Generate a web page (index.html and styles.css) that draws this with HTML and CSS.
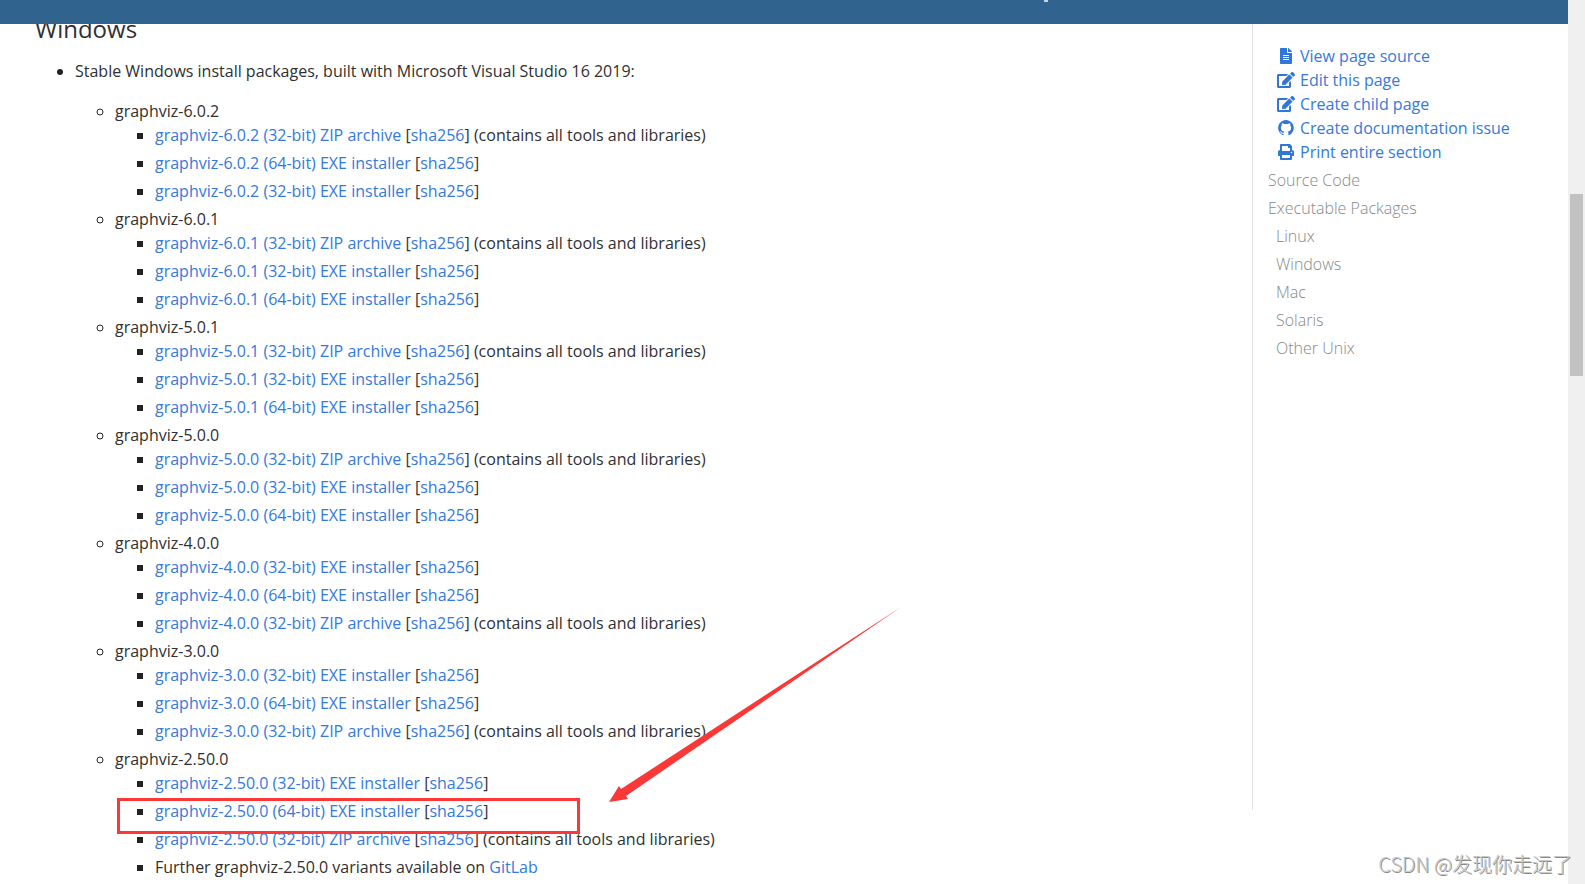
FILE: index.html
```
<!DOCTYPE html>
<html lang="en">
<head>
<meta charset="utf-8">
<title>Download | Graphviz</title>
<link rel="stylesheet" href="styles.css">
</head>
<body>
<header class="navbar"><span class="nav-mark"></span></header>
<div class="layout">
  <main class="content">
    <h3>Windows</h3>
    <ul class="packages">
      <li>
        <p>Stable Windows install packages, built with Microsoft Visual Studio 16 2019:</p>
        <ul>
          <li>graphviz-6.0.2
            <ul class="files">
              <li><a href="#">graphviz-6.0.2 (32-bit) ZIP archive</a> [<a href="#">sha256</a>] (contains all tools and libraries)</li>
              <li><a href="#">graphviz-6.0.2 (64-bit) EXE installer</a> [<a href="#">sha256</a>]</li>
              <li><a href="#">graphviz-6.0.2 (32-bit) EXE installer</a> [<a href="#">sha256</a>]</li>
            </ul>
          </li>
          <li>graphviz-6.0.1
            <ul class="files">
              <li><a href="#">graphviz-6.0.1 (32-bit) ZIP archive</a> [<a href="#">sha256</a>] (contains all tools and libraries)</li>
              <li><a href="#">graphviz-6.0.1 (32-bit) EXE installer</a> [<a href="#">sha256</a>]</li>
              <li><a href="#">graphviz-6.0.1 (64-bit) EXE installer</a> [<a href="#">sha256</a>]</li>
            </ul>
          </li>
          <li>graphviz-5.0.1
            <ul class="files">
              <li><a href="#">graphviz-5.0.1 (32-bit) ZIP archive</a> [<a href="#">sha256</a>] (contains all tools and libraries)</li>
              <li><a href="#">graphviz-5.0.1 (32-bit) EXE installer</a> [<a href="#">sha256</a>]</li>
              <li><a href="#">graphviz-5.0.1 (64-bit) EXE installer</a> [<a href="#">sha256</a>]</li>
            </ul>
          </li>
          <li>graphviz-5.0.0
            <ul class="files">
              <li><a href="#">graphviz-5.0.0 (32-bit) ZIP archive</a> [<a href="#">sha256</a>] (contains all tools and libraries)</li>
              <li><a href="#">graphviz-5.0.0 (32-bit) EXE installer</a> [<a href="#">sha256</a>]</li>
              <li><a href="#">graphviz-5.0.0 (64-bit) EXE installer</a> [<a href="#">sha256</a>]</li>
            </ul>
          </li>
          <li>graphviz-4.0.0
            <ul class="files">
              <li><a href="#">graphviz-4.0.0 (32-bit) EXE installer</a> [<a href="#">sha256</a>]</li>
              <li><a href="#">graphviz-4.0.0 (64-bit) EXE installer</a> [<a href="#">sha256</a>]</li>
              <li><a href="#">graphviz-4.0.0 (32-bit) ZIP archive</a> [<a href="#">sha256</a>] (contains all tools and libraries)</li>
            </ul>
          </li>
          <li>graphviz-3.0.0
            <ul class="files">
              <li><a href="#">graphviz-3.0.0 (32-bit) EXE installer</a> [<a href="#">sha256</a>]</li>
              <li><a href="#">graphviz-3.0.0 (64-bit) EXE installer</a> [<a href="#">sha256</a>]</li>
              <li><a href="#">graphviz-3.0.0 (32-bit) ZIP archive</a> [<a href="#">sha256</a>] (contains all tools and libraries)</li>
            </ul>
          </li>
          <li>graphviz-2.50.0
            <ul class="files">
              <li><a href="#">graphviz-2.50.0 (32-bit) EXE installer</a> [<a href="#">sha256</a>]</li>
              <li class="marked"><a href="#">graphviz-2.50.0 (64-bit) EXE installer</a> [<a href="#">sha256</a>]</li>
              <li><a href="#">graphviz-2.50.0 (32-bit) ZIP archive</a> [<a href="#">sha256</a>] (contains all tools and libraries)</li>
              <li>Further graphviz-2.50.0 variants available on <a href="#">GitLab</a></li>
            </ul>
          </li>
        </ul>
      </li>
    </ul>
  </main>
  <aside class="sidebar">
    <div class="page-meta">
      <a href="#"><svg class="icon" viewBox="-128 0 640 512" aria-hidden="true"><path d="M224 136V0H24C10.700 0 0 10.700 0 24v464c0 13.300 10.700 24 24 24h336c13.300 0 24-10.700 24-24V160H248c-13.200 0-24-10.800-24-24zm64 236c0 6.600-5.400 12-12 12H108c-6.600 0-12-5.400-12-12v-8c0-6.600 5.400-12 12-12h168c6.600 0 12 5.400 12 12v8zm0-64c0 6.600-5.400 12-12 12H108c-6.600 0-12-5.400-12-12v-8c0-6.600 5.400-12 12-12h168c6.600 0 12 5.400 12 12v8zm0-72v8c0 6.600-5.400 12-12 12H108c-6.600 0-12-5.400-12-12v-8c0-6.600 5.400-12 12-12h168c6.600 0 12 5.400 12 12zm96-114.100v6.100H256V0h6.100c6.400 0 12.500 2.500 17 7l97.900 98c4.500 4.500 7 10.600 7 16.900z"/></svg>View page source</a>
      <a href="#"><svg class="icon" viewBox="-32 0 640 512" aria-hidden="true"><path d="M402.600 83.200l90.200 90.200c3.800 3.800 3.800 10 0 13.800L274.400 405.600l-92.800 10.300c-12.400 1.400-22.900-9.100-21.500-21.500l10.300-92.800L388.800 83.200c3.800-3.800 10-3.800 13.800 0zm162-22.900l-48.800-48.800c-15.200-15.200-39.900-15.200-55.200 0l-35.400 35.400c-3.800 3.800-3.800 10 0 13.800l90.200 90.200c3.800 3.800 10 3.800 13.800 0l35.400-35.400c15.200-15.300 15.200-40 0-55.200zM384 346.200V448H64V128h229.800c3.200 0 6.200-1.300 8.500-3.500l40-40c7.600-7.600 2.200-20.500-8.500-20.500H48C21.500 64 0 85.500 0 112v352c0 26.500 21.500 48 48 48h352c26.500 0 48-21.500 48-48V306.200c0-10.700-12.900-16-20.500-8.500l-40 40c-2.200 2.300-3.500 5.300-3.500 8.500z"/></svg>Edit this page</a>
      <a href="#"><svg class="icon" viewBox="-32 0 640 512" aria-hidden="true"><path d="M402.600 83.200l90.200 90.200c3.800 3.800 3.800 10 0 13.800L274.400 405.600l-92.800 10.300c-12.400 1.400-22.900-9.100-21.500-21.500l10.300-92.800L388.800 83.200c3.800-3.800 10-3.800 13.800 0zm162-22.900l-48.800-48.800c-15.200-15.200-39.900-15.200-55.200 0l-35.400 35.400c-3.800 3.800-3.800 10 0 13.800l90.200 90.200c3.800 3.800 10 3.800 13.800 0l35.400-35.400c15.200-15.300 15.200-40 0-55.200zM384 346.200V448H64V128h229.800c3.200 0 6.200-1.300 8.500-3.500l40-40c7.600-7.600 2.200-20.500-8.500-20.500H48C21.500 64 0 85.500 0 112v352c0 26.500 21.500 48 48 48h352c26.500 0 48-21.500 48-48V306.200c0-10.700-12.900-16-20.500-8.500l-40 40c-2.200 2.300-3.500 5.300-3.500 8.500z"/></svg>Create child page</a>
      <a href="#"><svg class="icon" viewBox="-2 0 20 16" aria-hidden="true"><path fill-rule="evenodd" d="M5.500 15.300V13.700C3.300 14.100 2.800 12.900 2.500 12.200C2.300 11.800 1.900 11.400 1.500 11.200C2.700 10.900 3.300 11.800 3.700 12.300C4.200 13 5 12.900 5.600 12.700C5.700 12.200 5.900 11.900 6.200 11.600C3.900 11.300 2.900 9.900 2.900 7.800C2.900 6.900 3.200 6.100 3.800 5.500C3.600 4.900 3.600 4.100 3.900 3.300C4.600 3.200 5.400 3.600 6.100 4.100C7.300 3.800 8.700 3.800 9.900 4.100C10.600 3.600 11.400 3.200 12.100 3.300C12.400 4.100 12.400 4.900 12.200 5.500C12.800 6.100 13.100 6.900 13.100 7.800C13.100 9.900 12.100 11.300 9.800 11.600C10.200 12 10.400 12.600 10.400 13.200V15.300A7.800 7.800 0 1 0 5.500 15.300Z"/></svg>Create documentation issue</a>
      <a href="#"><svg class="icon" viewBox="-64 0 640 512" aria-hidden="true"><path d="M448 192V77.250c0-8.490-3.370-16.620-9.370-22.630L393.370 9.370c-6-6-14.140-9.370-22.630-9.370H96C78.330 0 64 14.330 64 32v160c-35.350 0-64 28.650-64 64v112c0 8.840 7.160 16 16 16h48v96c0 17.670 14.330 32 32 32h320c17.670 0 32-14.330 32-32v-96h48c8.840 0 16-7.160 16-16V256c0-35.350-28.650-64-64-64zm-64 256H128v-96h256v96zm0-224H128V64h192v48c0 8.840 7.160 16 16 16h48v96zm48 72c-13.250 0-24-10.750-24-24 0-13.260 10.750-24 24-24s24 10.740 24 24c0 13.250-10.750 24-24 24z"/></svg>Print entire section</a>
    </div>
    <nav class="toc">
      <ul>
        <li><a href="#">Source Code</a></li>
        <li><a href="#">Executable Packages</a>
          <ul>
            <li><a href="#">Linux</a></li>
            <li><a href="#">Windows</a></li>
            <li><a href="#">Mac</a></li>
            <li><a href="#">Solaris</a></li>
            <li><a href="#">Other Unix</a></li>
          </ul>
        </li>
      </ul>
    </nav>
  </aside>
  <div class="scrollbar"><div class="thumb"></div></div>
</div>
<svg class="arrow" viewBox="0 0 294 196" aria-hidden="true"><path d="M0 195L10 179L12 182L292 0L17 189L19 192Z"/></svg>
<div class="watermark">CSDN @发现你走远了</div>
</body>
</html>
```
FILE: styles.css
```
*,
*::after {
  box-sizing: border-box;
}

body {
  margin: 0;
  height: 100vh;
  overflow: hidden;
  position: relative;
  background: #fff;
  color: #303030;
  font: 16px/24px "Open Sans", sans-serif;
}

a {
  color: #3579dc;
  text-decoration: none;
}

ul {
  margin: 0;
  padding-left: 40px;
}

li::marker {
  color: #222;
}

.navbar {
  position: absolute;
  top: 0;
  left: 0;
  right: 17px;
  z-index: 2;
  height: 24px;
  background: #30638e;
}

.nav-mark {
  position: absolute;
  top: 0;
  left: 1044px;
  width: 4px;
  height: 2px;
  background: #c5d3df;
}

.layout {
  display: flex;
  height: 100vh;
}

.content {
  flex: 1;
  padding: 14px 16px 0 35px;
}

.content h3 {
  margin: 0 0 16px;
  font-size: 24px;
  line-height: 29px;
  font-weight: 400;
}

.content p {
  margin: 0 0 16px;
}

.packages {
  list-style: disc;
}

.packages ul {
  list-style: circle;
}

.packages .files {
  list-style: square;
}

.files li {
  margin-bottom: 4px;
}

.marked {
  position: relative;
}

.marked::after {
  content: "";
  position: absolute;
  top: -1px;
  left: -38px;
  width: 463px;
  height: 36px;
  border: 3px solid #fb3838;
}

.sidebar {
  width: 316px;
  height: calc(100vh - 74px);
  padding: 44px 15px 0;
  border-left: 1px solid #dee2e6;
}

.page-meta {
  display: flex;
  flex-direction: column;
  padding-left: 8px;
}

.page-meta a {
  display: flex;
  align-items: center;
  gap: 4px;
}

.icon {
  width: 20px;
  height: 16px;
  fill: #3176d9;
}

.toc ul {
  list-style: none;
  padding: 0;
}

.toc ul ul {
  padding-left: 8px;
}

.toc a {
  display: block;
  padding-top: 4px;
  color: #888;
  font-weight: 300;
}

.scrollbar {
  width: 17px;
  padding: 194px 2px 0;
  background: #f0f0f0;
}

.thumb {
  height: 182px;
  background: #c1c1c1;
}

.arrow {
  position: absolute;
  top: 607px;
  left: 609px;
  width: 294px;
  height: 196px;
  fill: #fb3838;
}

.watermark {
  position: absolute;
  right: 13px;
  bottom: 8px;
  z-index: 3;
  color: #c8c8c8;
  font: 300 20px/24px "Noto Sans CJK SC", sans-serif;
  text-shadow: 1px 1px 0 #888;
}
```
